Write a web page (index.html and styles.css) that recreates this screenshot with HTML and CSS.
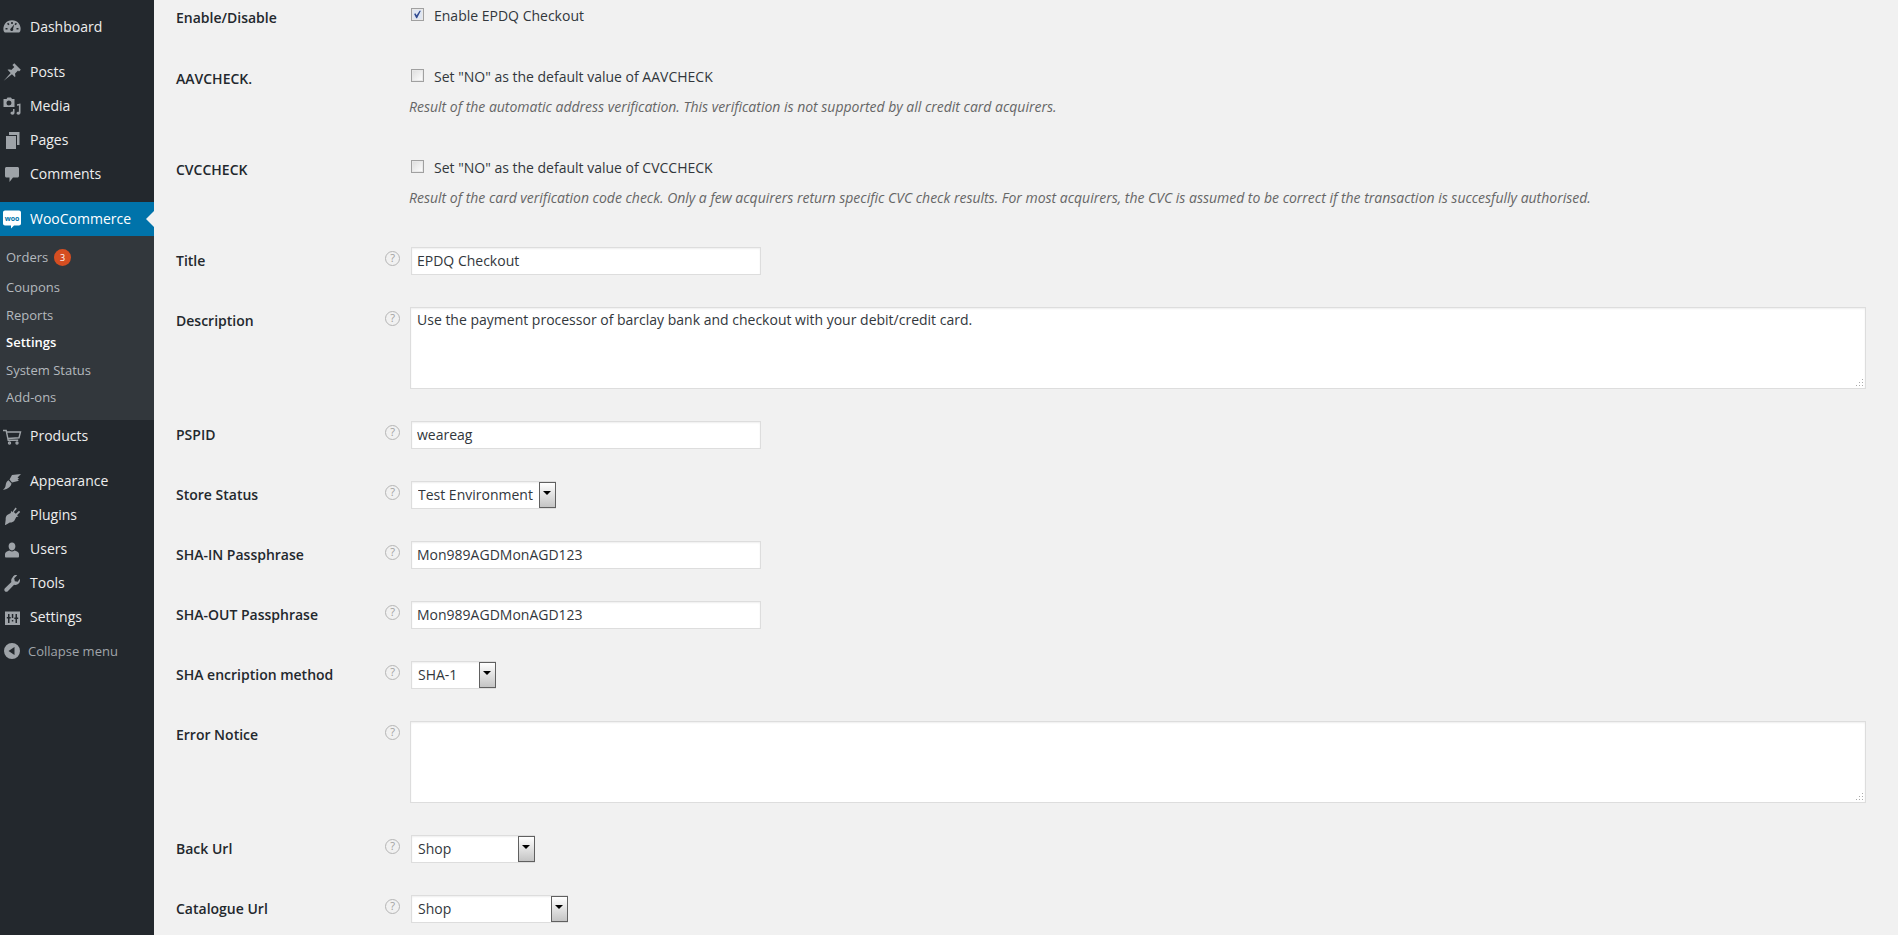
FILE: index.html
```html
<!DOCTYPE html>
<html lang="en">
  <head>
    <meta charset="UTF-8" />
    <title>WooCommerce Settings</title>
    <link rel="stylesheet" href="styles.css">
  </head>
  <body>
    <nav class="sidebar">
      <ul class="menu">
        <li class="menu-item"><svg class="menu-icon" viewBox="0 0 20 20"><path fill-rule="evenodd" d="M10 3.200a8.600 8.600 0 0 0-8.300 10.900c.2.900.9 1.500 1.800 1.500h13c.9 0 1.600-.6 1.800-1.500A8.600 8.600 0 0 0 10 3.200zM9.200 5h1.600v2H9.200zM5 6.800l1.200-1.100 1.300 1.500-1.200 1zM15 6.800l-1.300 1.400-1.200-1 1.300-1.500zM3.500 11h2v1.500h-2zM14.500 11h2v1.500h-2zM12.200 7.500l-1.100 4.300a1.500 1.500 0 1 1-2.400-.4z"/></svg><a href="#">Dashboard</a></li>
        <li class="menu-item menu-gap"><svg class="menu-icon" viewBox="0 0 20 20"><path d="M10.440 3.020l1.820-1.820 6.540 6.540-1.820 1.820-.97-.97-3.070 3.070c.4 1.200.6 2.500.1 3.700l-3.100-3.100-8.200 6.400 6.900-7.700-3.100-3.100c1.200-.5 2.500-.3 3.700.1l3.070-3.070z"/></svg><a href="#">Posts</a></li>
        <li class="menu-item"><svg class="menu-icon" viewBox="0 0 20 20"><path fill-rule="evenodd" d="M1.500 3h3l1-1.500h3.500L10 3h2.500v8h-11zM7 4.500a2.500 2.500 0 1 0 0 5 2.500 2.500 0 0 0 0-5z"/><path d="M18.500 7.500v9.300c0 1.100-1 2-2.100 2s-1.900-.8-1.900-1.700 1-1.700 2.400-1.400V9.500l-1.900.3v-1.600zM12.500 13v3.800c0 1.100-.9 2-2 2s-2-.8-2-1.700 1.100-1.900 2.500-1.600V13z"/></svg><a href="#">Media</a></li>
        <li class="menu-item"><svg class="menu-icon" viewBox="0 0 20 20"><path d="M7 2h10.500v13H15V5H7z"/><path d="M4 6h10v13H4z"/></svg><a href="#">Pages</a></li>
        <li class="menu-item"><svg class="menu-icon" viewBox="0 0 20 20"><path d="M4.500 3h11c.8 0 1.500.7 1.500 1.500V12c0 .8-.7 1.500-1.500 1.500H11L7.500 18v-4.500h-3C3.700 13.500 3 12.800 3 12V4.500C3 3.700 3.700 3 4.500 3z"/></svg><a href="#">Comments</a></li>
        <li class="menu-item menu-gap menu-active"><svg class="menu-icon" viewBox="0 0 20 20"><path class="woo-bubble" d="M3 1.500h14c1.100 0 2 .9 2 2v11c0 1.100-.9 2-2 2h-5l-3 3v-3H3c-1.100 0-2-.9-2-2v-11c0-1.100.9-2 2-2z"/><text class="woo-text" x="10" y="11.500" text-anchor="middle">woo</text></svg><a href="#">WooCommerce</a></li>
      </ul>
      <ul class="submenu">
        <li class="sub-orders"><a href="#">Orders</a><span class="badge">3</span></li>
        <li><a href="#">Coupons</a></li>
        <li><a href="#">Reports</a></li>
        <li class="sub-current"><a href="#">Settings</a></li>
        <li><a href="#">System Status</a></li>
        <li><a href="#">Add-ons</a></li>
      </ul>
      <ul class="menu">
        <li class="menu-item"><svg class="menu-icon menu-icon-line" viewBox="0 0 20 20"><path d="M1 3.500h3.200l2 9.800h10"/><path d="M5 5h13.500l-1.500 5.800-11 .7"/><circle cx="7.500" cy="16" r="1"/><circle cx="15" cy="16" r="1"/></svg><a href="#">Products</a></li>
        <li class="menu-item menu-gap"><svg class="menu-icon" viewBox="0 0 20 20"><path d="M10 3l9-1-3.500 3.500 1.500 1-1.500 1.200 1.500 1-7 1.800-2.500-3zM6.500 8.200l3 3.300c-.3 2.500-2.500 4.500-5 5.500l-3.500 1c1.500-1.500 2.500-3 2.700-5 .2-2.200 1.400-4 2.800-4.800z"/></svg><a href="#">Appearance</a></li>
        <li class="menu-item"><svg class="menu-icon" viewBox="0 0 20 20"><path d="M13.500 1.500l1.300 1.200-3 3.300 2 1.800 3.200-3 1.200 1.200-3.200 3.300 1.500 1.200-2.200.6-2 3.600c-1 1.300-3 2-4.500 1.800L3.500 19H3l.7-5.600c-.2-1.500.3-3.200 1.500-4.300L8.800 7 9 4.800l1.300 1.400z"/></svg><a href="#">Plugins</a></li>
        <li class="menu-item"><svg class="menu-icon" viewBox="0 0 20 20"><path d="M10 2.500c2 0 3.400 1.600 3.400 3.800S12 10.500 10 10.500 6.600 8.500 6.600 6.300 8 2.500 10 2.500zM7.500 10.500c1.500 1.200 3.500 1.200 5 0 2 .5 4.500 1.500 4.500 3.500v2.500c0 .5-.5 1-1 1H4c-.5 0-1-.5-1-1V14c0-2 2.500-3 4.500-3.500z"/></svg><a href="#">Users</a></li>
        <li class="menu-item"><svg class="menu-icon" viewBox="0 0 20 20"><path d="M17.800 4.800c.5 1.700.2 3.500-1.100 4.800-1.300 1.300-3 1.600-4.600 1.100l-6.300 6.500c-.8.800-2.100.8-2.900 0s-.8-2.100 0-2.900l6.500-6.300c-.5-1.600-.2-3.300 1.100-4.600C11.800 1.100 13.500.8 15.200 1.300l-3 3 .6 2.900 2.900.6z"/></svg><a href="#">Tools</a></li>
        <li class="menu-item"><svg class="menu-icon" viewBox="0 0 20 20"><path fill-rule="evenodd" d="M3 3.500h15v13.500H3zM6 6v3H4.800v1.500H6V15h1.500v-4.500h1.200V9H7.500V6zM13.500 6v3.500h-1.200V11h1.200v4H15v-4h1.200V9.500H15V6zM9.800 12v1.500h1.500V12zM9.800 6v4h1.500V6z"/></svg><a href="#">Settings</a></li>
        <li class="menu-collapse"><svg class="menu-icon" viewBox="0 0 20 20"><path fill-rule="evenodd" d="M10 2a8 8 0 1 0 0 16 8 8 0 0 0 0-16zM12.500 6v8l-6-4z"/></svg><a href="#">Collapse menu</a></li>
      </ul>
    </nav>

    <main class="content">
      <div class="form-row form-row-first">
        <div class="field-label">Enable/Disable</div>
        <div class="field-help"></div>
        <div class="field">
          <label class="check-line"><input type="checkbox" checked> Enable EPDQ Checkout</label>
        </div>
      </div>

      <div class="form-row form-row-check">
        <div class="field-label">AAVCHECK.</div>
        <div class="field-help"></div>
        <div class="field">
          <label class="check-line"><input type="checkbox"> Set "NO" as the default value of AAVCHECK</label>
          <p class="description">Result of the automatic address verification. This verification is not supported by all credit card acquirers.</p>
        </div>
      </div>

      <div class="form-row form-row-check">
        <div class="field-label">CVCCHECK</div>
        <div class="field-help"></div>
        <div class="field">
          <label class="check-line"><input type="checkbox"> Set "NO" as the default value of CVCCHECK</label>
          <p class="description">Result of the card verification code check. Only a few acquirers return specific CVC check results. For most acquirers, the CVC is assumed to be correct if the transaction is succesfully authorised.</p>
        </div>
      </div>

      <div class="form-row">
        <div class="field-label">Title</div>
        <div class="field-help"><span class="help-tip">?</span></div>
        <div class="field"><input class="text-input" type="text" value="EPDQ Checkout"></div>
      </div>

      <div class="form-row">
        <div class="field-label">Description</div>
        <div class="field-help"><span class="help-tip">?</span></div>
        <div class="field"><textarea class="text-area">Use the payment processor of barclay bank and checkout with your debit/credit card.</textarea></div>
      </div>

      <div class="form-row">
        <div class="field-label">PSPID</div>
        <div class="field-help"><span class="help-tip">?</span></div>
        <div class="field"><input class="text-input" type="text" value="weareag"></div>
      </div>

      <div class="form-row">
        <div class="field-label">Store Status</div>
        <div class="field-help"><span class="help-tip">?</span></div>
        <div class="field">
          <div class="select select-store"><select><option>Test Environment</option></select><span class="select-arrow"></span></div>
        </div>
      </div>

      <div class="form-row">
        <div class="field-label">SHA-IN Passphrase</div>
        <div class="field-help"><span class="help-tip">?</span></div>
        <div class="field"><input class="text-input" type="text" value="Mon989AGDMonAGD123"></div>
      </div>

      <div class="form-row">
        <div class="field-label">SHA-OUT Passphrase</div>
        <div class="field-help"><span class="help-tip">?</span></div>
        <div class="field"><input class="text-input" type="text" value="Mon989AGDMonAGD123"></div>
      </div>

      <div class="form-row">
        <div class="field-label">SHA encription method</div>
        <div class="field-help"><span class="help-tip">?</span></div>
        <div class="field">
          <div class="select select-sha"><select><option>SHA-1</option></select><span class="select-arrow"></span></div>
        </div>
      </div>

      <div class="form-row">
        <div class="field-label">Error Notice</div>
        <div class="field-help"><span class="help-tip">?</span></div>
        <div class="field"><textarea class="text-area"></textarea></div>
      </div>

      <div class="form-row">
        <div class="field-label">Back Url</div>
        <div class="field-help"><span class="help-tip">?</span></div>
        <div class="field">
          <div class="select select-back"><select><option>Shop</option></select><span class="select-arrow"></span></div>
        </div>
      </div>

      <div class="form-row">
        <div class="field-label">Catalogue Url</div>
        <div class="field-help"><span class="help-tip">?</span></div>
        <div class="field">
          <div class="select select-catalogue"><select><option>Shop</option></select><span class="select-arrow"></span></div>
        </div>
      </div>
    </main>
  </body>
</html>
```

FILE: styles.css
```css
* {
  box-sizing: border-box;
}

html,
body {
  height: 100%;
}

body {
  font-family: "Open Sans", "Noto Sans", sans-serif;
  font-size: 14px;
  background-color: #f1f1f1;
  color: #444;
  margin: 0;
  padding: 0;
  display: flex;
  overflow: hidden;
}

/* sidebar */

.sidebar {
  width: 154px;
  flex: none;
  background-color: #23282d;
  padding-top: 10px;
}

.sidebar ul {
  list-style-type: none;
  margin: 0;
  padding: 0;
}

.sidebar a {
  color: #eee;
  text-decoration: none;
}

.menu-item {
  position: relative;
  display: flex;
  align-items: center;
  height: 34px;
  padding-left: 2px;
}

.menu-item a {
  margin: 0 0 2px 8px;
}

.menu-gap {
  margin-top: 11px;
}

.menu-icon {
  width: 20px;
  height: 20px;
  flex: none;
  fill: #9ea3a8;
}

.menu-icon-line {
  fill: none;
  stroke: #9ea3a8;
  stroke-width: 1.4;
}

.menu-active {
  background-color: #0073aa;
}

.menu-active a {
  color: #fff;
}

.menu-active::after {
  content: "";
  position: absolute;
  right: 0;
  top: 9px;
  border: 8px solid transparent;
  border-left-width: 0;
  border-right-color: #f1f1f1;
}

.woo-bubble {
  fill: #fff;
}

.woo-text {
  fill: #0073aa;
  font-size: 7px;
  font-weight: 700;
}

.sidebar .submenu {
  background-color: #32373c;
  padding: 4px 0 8px;
  font-size: 13px;
}

.submenu li {
  height: 27.5px;
  line-height: 27px;
  padding-left: 6px;
}

.submenu a {
  color: #b4b9be;
}

.submenu .sub-orders {
  height: 34px;
  line-height: 32px;
  display: flex;
  align-items: center;
}

.submenu .sub-current a {
  color: #fff;
  font-weight: 600;
}

.badge {
  width: 17px;
  height: 17px;
  margin-left: 6px;
  border-radius: 50%;
  background-color: #d54e21;
  color: #fff;
  font-size: 9px;
  line-height: 17px;
  text-align: center;
}

.menu-collapse {
  display: flex;
  align-items: center;
  height: 34px;
  margin-top: -1px;
  padding-left: 2px;
  font-size: 13px;
}

.menu-collapse a {
  margin-left: 6px;
  color: #a0a5aa;
}

/* settings form */

.content {
  flex: 1;
  padding: 0 32px 0 22px;
  color: #32373c;
}

.form-row {
  display: grid;
  grid-template-columns: 209px 26px 1fr;
  padding: 15px 0;
}

.form-row-first {
  padding: 3px 0 19px;
}

.form-row-check {
  padding: 15px 0 21px;
}

.field-label {
  margin-top: 3px;
  line-height: 24px;
  font-weight: 600;
  color: #23282d;
}

.help-tip {
  display: block;
  width: 15px;
  height: 15px;
  margin-top: 5px;
  border: 1.5px solid #b5b5b5;
  border-radius: 50%;
  color: #a0a0a0;
  font-size: 11px;
  line-height: 12px;
  text-align: center;
}

.check-line {
  display: flex;
  align-items: center;
  height: 24px;
  gap: 10px;
}

.check-line input {
  appearance: none;
  width: 13px;
  height: 13px;
  margin: 0 0 1px;
  flex: none;
  border: 1px solid #a0a0a0;
  background: linear-gradient(135deg, #dcdcdc, #fff);
  box-shadow: inset 0 0 0 1px #e8e8e8;
}

.check-line input:checked {
  background: #dfe6f2 url("data:image/svg+xml,%3Csvg xmlns='http://www.w3.org/2000/svg' viewBox='0 0 13 13'%3E%3Cpath d='M2.5 6l1.500-1 1.500 2.500L9 2h1.500L6 11H5z' fill='%23304a90'/%3E%3C/svg%3E") center no-repeat;
}

.description {
  margin: 7px 0 0 -2px;
  line-height: 24px;
  font-style: italic;
  letter-spacing: -0.01px;
  color: #666;
}

.text-input,
.text-area,
.select select {
  font-family: inherit;
  font-size: 14px;
  color: #32373c;
  background-color: #fff;
  border: 1px solid #ddd;
  box-shadow: inset 0 1px 2px rgba(0, 0, 0, 0.07);
  border-radius: 0;
  outline: none;
}

.text-input {
  display: block;
  width: 350px;
  height: 28px;
  margin: 1px 0;
  padding: 0 5px 2px;
}

.text-area {
  display: block;
  width: calc(100% + 1px);
  height: 82px;
  margin: 1px 0 1px -1px;
  padding: 2px 6px;
  line-height: 20px;
  resize: none;
  background: #fff url("data:image/svg+xml,%3Csvg xmlns='http://www.w3.org/2000/svg' viewBox='0 0 8 8'%3E%3Cpath d='M6 0h1v1H6zM6 3h1v1H6zM6 6h1v1H6zM3 3h1v1H3zM3 6h1v1H3zM0 6h1v1H0z' fill='%23aaa'/%3E%3C/svg%3E") right 1px bottom 1px / 8px 8px no-repeat;
}

.select {
  position: relative;
  height: 28px;
  margin: 1px 0;
}

.select select {
  appearance: none;
  display: block;
  width: 100%;
  height: 28px;
  padding: 0 6px 2px;
}

.select-store {
  width: 145px;
}

.select-sha {
  width: 85px;
}

.select-back {
  width: 124px;
}

.select-catalogue {
  width: 157px;
}

.select-arrow {
  position: absolute;
  top: 1px;
  right: 0;
  bottom: 1px;
  width: 17px;
  border: 1px solid #606060;
  background: linear-gradient(#fff, #c4c4c4);
}

.select-arrow::after {
  content: "";
  position: absolute;
  top: 8px;
  left: 3px;
  border: 4px solid transparent;
  border-top-color: #000;
  border-bottom-width: 0;
}
```
